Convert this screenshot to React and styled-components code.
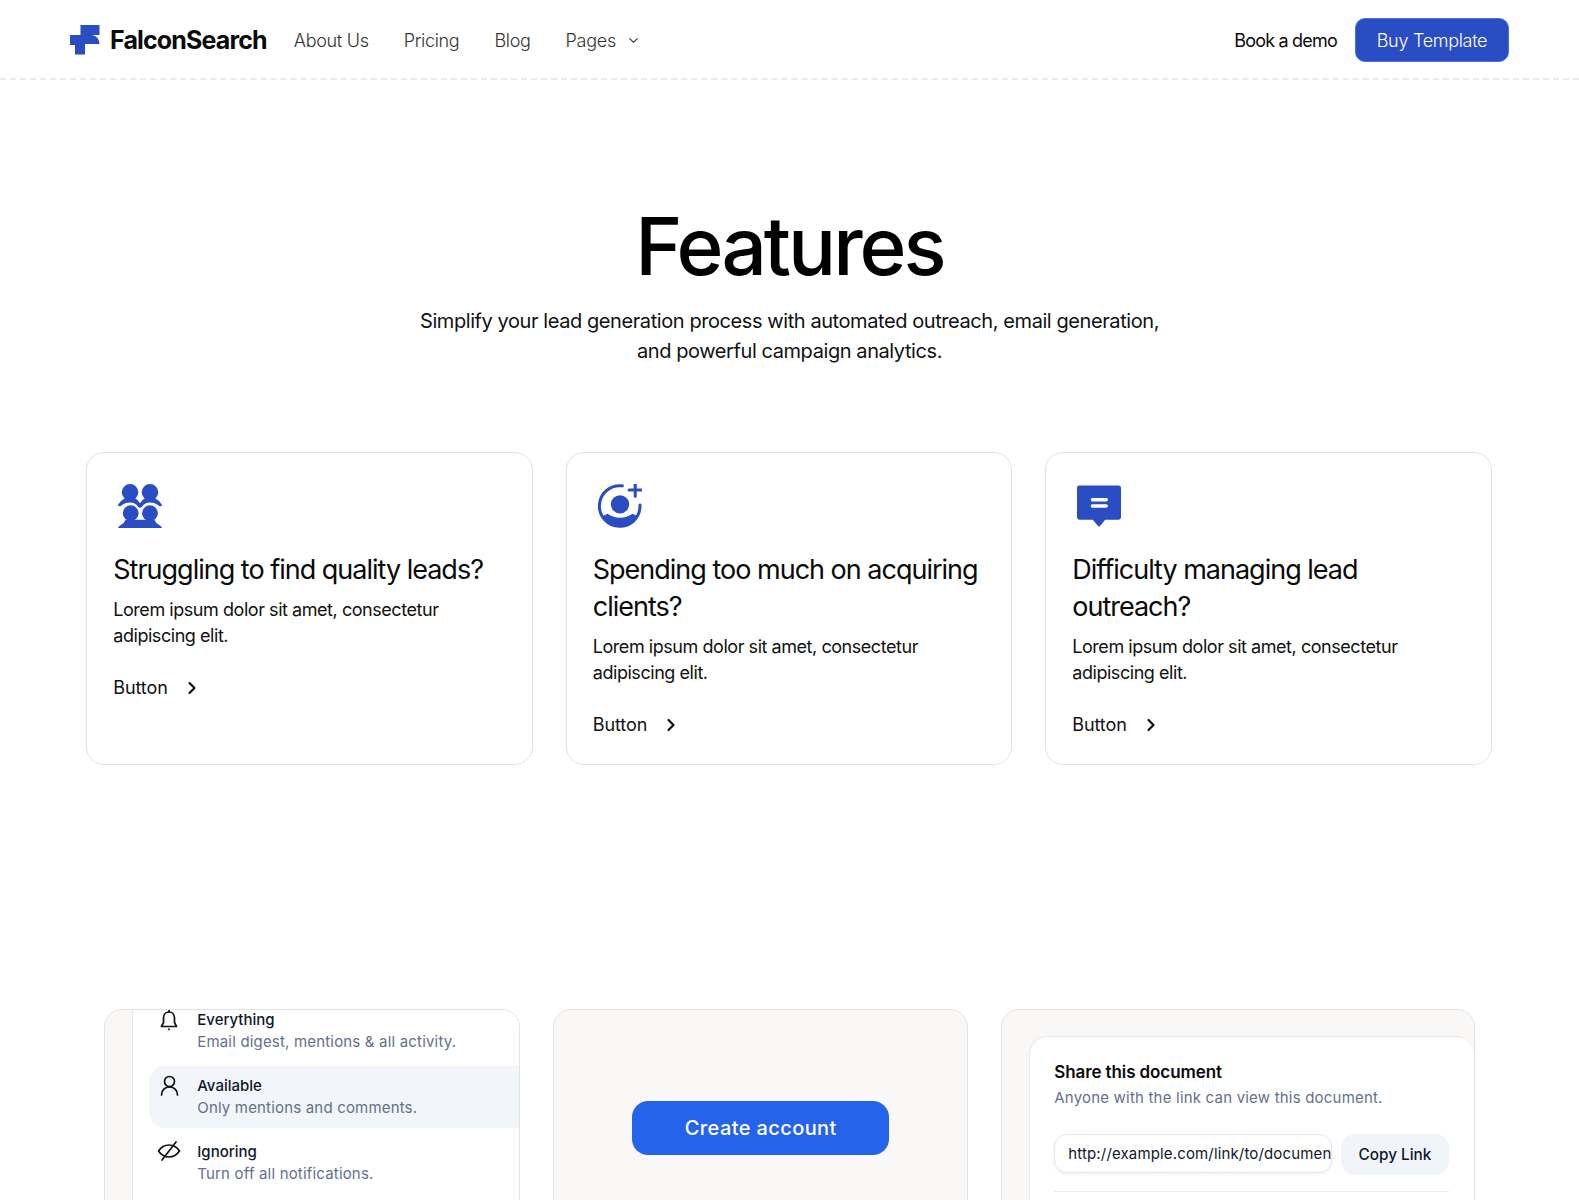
import styled, { createGlobalStyle } from "styled-components";
import { ChevronDown, ChevronRight } from "lucide-react";

const GlobalStyle = createGlobalStyle`
  html, body {
    margin: 0;
    padding: 0;
    background: #fff;
  }
  body {
    height: 1200px;
    overflow: hidden;
    font-family: "Inter", "Liberation Sans", sans-serif;
    color: #0b0b0b;
  }
`;

const Nav = styled.header`
  display: flex;
  align-items: center;
  justify-content: space-between;
  box-sizing: border-box;
  height: 80px;
  padding: 2px 70px 0;
  border-bottom: 2px dashed #ebebeb;
`;
const NavLeft = styled.div`
  display: flex;
  align-items: center;
`;
const Brand = styled.div`
  display: flex;
  align-items: center;
  gap: 10px;
  margin-right: 27px;
  font-size: 25px;
  font-weight: 700;
  letter-spacing: -0.85px;
`;
const NavLinks = styled.nav`
  display: flex;
  align-items: center;
  gap: 35px;
`;
const NavLink = styled.a`
  display: flex;
  align-items: center;
  gap: 10px;
  font-size: 18px;
  font-weight: 300;
  letter-spacing: -0.3px;
  color: #333;
`;
const NavRight = styled.div`
  display: flex;
  align-items: center;
  gap: 18px;
`;
const DemoLink = styled.a`
  font-size: 18px;
  letter-spacing: -0.8px;
  font-weight: 400;
`;
const BuyButton = styled.button`
  height: 44px;
  width: 154px;
  border: 1px solid #4d6ee0;
  border-radius: 10px;
  background: #2a4dc4;
  color: #fff;
  font: 300 18px "Inter", sans-serif;
  letter-spacing: -0.3px;
`;

const Hero = styled.section`
  display: flex;
  flex-direction: column;
  align-items: center;
  padding-top: 120px;
  text-align: center;
`;
const Title = styled.h1`
  margin: 0;
  font-size: 80px;
  line-height: 92px;
  font-weight: 450;
  letter-spacing: -3px;
  color: #000;
`;
const Lead = styled.p`
  margin: 14px 0 0;
  font-size: 20px;
  line-height: 30px;
  letter-spacing: -0.42px;
  font-weight: 400;
  color: #111;
`;

const Cards = styled.section`
  display: grid;
  grid-template-columns: repeat(3, 446.5px);
  gap: 33px;
  justify-content: center;
  margin-top: 86px;
  padding-right: 1px;
`;
const Card = styled.article`
  display: flex;
  flex-direction: column;
  align-items: flex-start;
  height: 313px;
  box-sizing: border-box;
  padding: 31px 26px 0;
  border: 1px solid #e2e2e2;
  border-radius: 18px;
  background: #fff;
`;
const CardIcon = styled.svg`
  display: block;
  width: 44px;
  height: 44px;
  margin-left: 5px;
  color: #2a4dc4;
`;
const CardTitle = styled.h3`
  margin: 23px 0 0;
  font-size: 27px;
  line-height: 37px;
  font-weight: 400;
  letter-spacing: -1px;
  color: #0a0a0a;
`;
const CardText = styled.p`
  margin: 9px 0 0;
  font-size: 18px;
  line-height: 26px;
  letter-spacing: -0.45px;
  color: #111;
`;
const CardLink = styled.a`
  display: flex;
  align-items: center;
  gap: 14px;
  margin-top: 26px;
  font-size: 18px;
  line-height: 26px;
  letter-spacing: -0.1px;
  color: #111;
`;

const Showcase = styled.section`
  display: grid;
  grid-template-columns: 416px 415px 473.5px;
  gap: 33px;
  justify-content: center;
  margin-top: 244px;
`;
const Panel = styled.div`
  height: 238px;
  box-sizing: border-box;
  overflow: hidden;
  border: 1px solid #e3e3e3;
  border-radius: 18px;
  background: #faf8f7;
  display: flex;
  align-items: ${(p) => (p.$center ? "center" : "flex-start")};
  justify-content: ${(p) => (p.$center ? "center" : "flex-start")};
  padding: ${(p) => p.$pad || "0"};
`;
const InnerCard = styled.div`
  flex: 1;
  align-self: stretch;
  box-sizing: border-box;
  background: #fff;
  border: 1px solid #e8e8e8;
  border-right: 0;
`;
const ListCard = styled(InnerCard)`
  border-top: 0;
  border-bottom: 0;
  padding: 0 0 0 16px;
`;
const OptionList = styled.div`
  display: flex;
  flex-direction: column;
  gap: 4px;
  margin-top: -10px;
`;
const Option = styled.div`
  display: grid;
  grid-template-columns: 24px 1fr;
  column-gap: 16px;
  height: 62px;
  box-sizing: border-box;
  padding: 9px 0 0 8px;
  border-radius: 16px 0 0 16px;
  background: ${(p) => (p.$active ? "#f2f5f9" : "transparent")};
`;
const OptionIcon = styled.svg`
  width: 24px;
  height: 24px;
  fill: none;
  stroke: #111;
  stroke-width: 1.7;
  stroke-linecap: round;
  stroke-linejoin: round;
`;
const OptionName = styled.div`
  font-size: 15px;
  line-height: 22px;
  font-weight: 500;
  color: #0f172a;
`;
const OptionHint = styled.div`
  font-size: 15px;
  line-height: 22px;
  color: #64708a;
  letter-spacing: 0.18px;
`;

const CreateButton = styled.button`
  width: 257px;
  height: 54px;
  border: 0;
  border-radius: 16px;
  background: #2563eb;
  color: #fff;
  font: 500 20px "Inter", sans-serif;
  letter-spacing: 0.4px;
`;

const ShareCard = styled(InnerCard)`
  border-radius: 18px 18px 0 0;
  border-bottom: 0;
  padding: 23px 25px 0 24px;
`;
const ShareTitle = styled.div`
  font-size: 17px;
  line-height: 24px;
  font-weight: 600;
  letter-spacing: -0.1px;
`;
const ShareHint = styled.div`
  margin-top: 3px;
  font-size: 15px;
  line-height: 22px;
  color: #64708a;
  letter-spacing: 0.2px;
`;
const ShareRow = styled.div`
  display: flex;
  gap: 9px;
  margin-top: 25px;
  padding-bottom: 16px;
  border-bottom: 1px solid #e8ebef;
`;
const UrlField = styled.input`
  width: 278px;
  height: 39px;
  box-sizing: border-box;
  padding: 0 0 0 13px;
  border: 1px solid #e6e8ec;
  border-radius: 13px;
  outline: 0;
  box-shadow: 0 1px 3px rgba(15, 23, 42, 0.08);
  font: 400 15px "Inter", sans-serif;
  letter-spacing: 0.15px;
  color: #0f172a;
`;
const CopyButton = styled.button`
  flex: 1;
  height: 41px;
  border: 0;
  border-radius: 14px;
  background: #f1f5f9;
  color: #0f172a;
  font: 500 15.3px "Inter", sans-serif;
`;

function Logo() {
  return (
    <svg width="30" height="30" viewBox="0 0 30 30" fill="#2a4dc4">
      <path d="M10.500 0H29.500V10H21C26 10 29.500 14 29.500 19H15V29.500H5V20H0V10H10.500Z" />
    </svg>
  );
}

function PeopleIcon() {
  return (
    <CardIcon viewBox="0 0 128 128" fill="currentColor">
      <circle cx="35" cy="24" r="24" />
      <circle cx="93" cy="24" r="24" />
      <path d="M0 60Q8 48 22 40H48Q58 46 64 56Q70 46 80 40H106Q120 48 128 60Q128 66 120 64Q108 54 93 54Q78 54 70 66Q64 72 58 66Q50 54 35 54Q20 54 8 64Q0 66 0 60Z" />
      <circle cx="37" cy="85" r="23" />
      <circle cx="93" cy="85" r="23" />
      <path d="M0 128Q2 122 10 118Q18 114 22 104H106Q110 114 118 118Q126 122 128 128Z" />
    </CardIcon>
  );
}

function PersonPlusIcon() {
  return (
    <CardIcon viewBox="0 0 130 130">
      <path
        d="M72 5.500A60 60 0 1 0 124 62"
        fill="none"
        stroke="currentColor"
        strokeWidth="9"
        strokeLinecap="round"
      />
      <circle cx="65" cy="60" r="27" fill="currentColor" />
      <path
        d="M28 88Q45 100 65 100Q85 100 102 88Q112 92 118 98Q100 128 65 128Q30 128 12 98Q18 92 28 88Z"
        fill="currentColor"
      />
      <path
        d="M110 1V36M92 18H128"
        fill="none"
        stroke="currentColor"
        strokeWidth="9"
        strokeLinecap="round"
      />
    </CardIcon>
  );
}

function ChatIcon() {
  return (
    <CardIcon viewBox="0 0 128 128">
      <path
        d="M7 4H121A7 7 0 0 1 128 11V97A7 7 0 0 1 121 104H82L67 122Q64 125 61 122L46 104H7A7 7 0 0 1 0 97V11A7 7 0 0 1 7 4Z"
        fill="currentColor"
      />
      <path
        d="M45 46H85M45 64H85"
        stroke="#fff"
        strokeWidth="10"
        strokeLinecap="round"
      />
    </CardIcon>
  );
}

const features = [
  { icon: <PeopleIcon />, title: "Struggling to find quality leads?" },
  { icon: <PersonPlusIcon />, title: "Spending too much on acquiring clients?" },
  { icon: <ChatIcon />, title: "Difficulty managing lead outreach?" },
];

const options = [
  {
    name: "Everything",
    hint: "Email digest, mentions & all activity.",
    icon: (
      <>
        <path d="M12 3C8.500 3 6.500 5.500 6.500 9V13.500L4.500 17.500H19.500L17.500 13.500V9C17.500 5.500 15.500 3 12 3Z" />
        <path d="M12 1V3M12 20V20.500" />
      </>
    ),
  },
  {
    name: "Available",
    hint: "Only mentions and comments.",
    active: true,
    icon: (
      <>
        <circle cx="12.500" cy="6.500" r="5" />
        <path d="M4.500 20c0-5 3.500-8 8-8s8 3 8 8" />
      </>
    ),
  },
  {
    name: "Ignoring",
    hint: "Turn off all notifications.",
    icon: (
      <>
        <path d="M1.500 10c3-4.500 6.500-6 10.500-6s7.500 1.500 10.500 6c-3 4.500-6.500 6-10.500 6s-7.500-1.500-10.500-6Z" />
        <path d="M5 19 19 1" />
      </>
    ),
  },
];

export default function App() {
  return (
    <>
      <GlobalStyle />
      <Nav>
        <NavLeft>
          <Brand>
            <Logo />
            FalconSearch
          </Brand>
          <NavLinks>
            <NavLink>About Us</NavLink>
            <NavLink>Pricing</NavLink>
            <NavLink>Blog</NavLink>
            <NavLink>
              Pages
              <ChevronDown size={15} strokeWidth={1.8} />
            </NavLink>
          </NavLinks>
        </NavLeft>
        <NavRight>
          <DemoLink>Book a demo</DemoLink>
          <BuyButton>Buy Template</BuyButton>
        </NavRight>
      </Nav>

      <Hero>
        <Title>Features</Title>
        <Lead>
          Simplify your lead generation process with automated outreach, email generation,
          <br />
          and powerful campaign analytics.
        </Lead>
      </Hero>

      <Cards>
        {features.map((f) => (
          <Card key={f.title}>
            {f.icon}
            <CardTitle>{f.title}</CardTitle>
            <CardText>
              Lorem ipsum dolor sit amet, consectetur
              <br />
              adipiscing elit.
            </CardText>
            <CardLink>
              Button
              <ChevronRight size={20} strokeWidth={2.6} />
            </CardLink>
          </Card>
        ))}
      </Cards>

      <Showcase>
        <Panel $pad="0 0 0 27px">
          <ListCard>
            <OptionList>
              {options.map((o) => (
                <Option key={o.name} $active={o.active}>
                  <OptionIcon viewBox="0 0 24 24">{o.icon}</OptionIcon>
                  <div>
                    <OptionName>{o.name}</OptionName>
                    <OptionHint>{o.hint}</OptionHint>
                  </div>
                </Option>
              ))}
            </OptionList>
          </ListCard>
        </Panel>
        <Panel $center>
          <CreateButton>Create account</CreateButton>
        </Panel>
        <Panel $pad="26px 0 0 27px">
          <ShareCard>
            <ShareTitle>Share this document</ShareTitle>
            <ShareHint>Anyone with the link can view this document.</ShareHint>
            <ShareRow>
              <UrlField readOnly value="http://example.com/link/to/document" />
              <CopyButton>Copy Link</CopyButton>
            </ShareRow>
          </ShareCard>
        </Panel>
      </Showcase>
    </>
  );
}
